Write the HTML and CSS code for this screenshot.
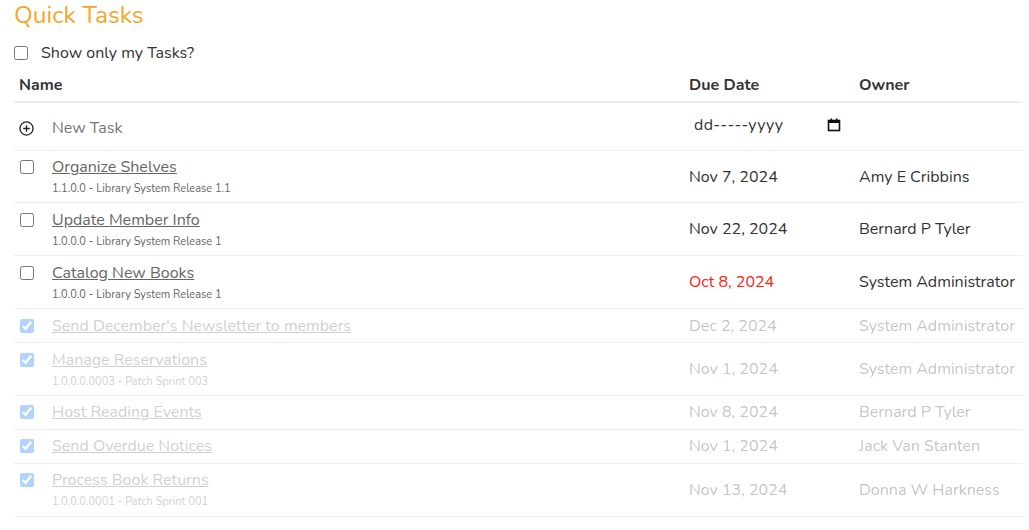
FILE: index.html
```html
<!DOCTYPE html>
<html lang="en">
<head>
<meta charset="utf-8">
<title>Quick Tasks</title>
<link rel="stylesheet" href="styles.css">
</head>
<body>
<main class="page">
  <h1 class="title">Quick Tasks</h1>
  <label class="filter"><input type="checkbox" class="cb"> <span>Show only my Tasks?</span></label>
  <table class="tasks">
    <colgroup><col class="c-name"><col class="c-due"><col class="c-owner"></colgroup>
    <thead>
      <tr><th>Name</th><th>Due Date</th><th>Owner</th></tr>
    </thead>
    <tbody>
      <tr class="new-row">
        <td>
          <div class="name-cell">
            <svg class="plus" width="15" height="15" viewBox="0 0 16 16"><circle cx="8" cy="8" r="7" fill="none" stroke="#222" stroke-width="1.4"/><path d="M8 4.5v7M4.5 8h7" stroke="#222" stroke-width="1.4"/></svg>
            <span class="new-text">New Task</span>
          </div>
        </td>
        <td>
          <div class="date-input"><span class="date-ph">dd-----yyyy</span>
            <svg class="cal" width="14" height="14" viewBox="0 0 14 14"><rect x="1.5" y="2.5" width="11" height="10" fill="none" stroke="#111" stroke-width="1.6"/><rect x="1" y="2" width="12" height="3" fill="#111"/><rect x="3.5" y="0.5" width="1.6" height="2.5" fill="#111"/><rect x="8.9" y="0.5" width="1.6" height="2.5" fill="#111"/></svg>
          </div>
        </td>
        <td></td>
      </tr>
      <tr>
        <td><div class="name-cell"><input type="checkbox" class="cb"><div><a class="task-link" href="#">Organize Shelves</a><div class="sub">1.1.0.0 - Library System Release 1.1</div></div></div></td>
        <td>Nov 7, 2024</td>
        <td>Amy E Cribbins</td>
      </tr>
      <tr>
        <td><div class="name-cell"><input type="checkbox" class="cb"><div><a class="task-link" href="#">Update Member Info</a><div class="sub">1.0.0.0 - Library System Release 1</div></div></div></td>
        <td>Nov 22, 2024</td>
        <td>Bernard P Tyler</td>
      </tr>
      <tr>
        <td><div class="name-cell"><input type="checkbox" class="cb"><div><a class="task-link" href="#">Catalog New Books</a><div class="sub">1.0.0.0 - Library System Release 1</div></div></div></td>
        <td class="overdue">Oct 8, 2024</td>
        <td>System Administrator</td>
      </tr>
      <tr class="done">
        <td><div class="name-cell"><input type="checkbox" class="cb" checked><div><a class="task-link" href="#">Send December's Newsletter to members</a></div></div></td>
        <td>Dec 2, 2024</td>
        <td>System Administrator</td>
      </tr>
      <tr class="done">
        <td><div class="name-cell"><input type="checkbox" class="cb" checked><div><a class="task-link" href="#">Manage Reservations</a><div class="sub">1.0.0.0.0003 - Patch Sprint 003</div></div></div></td>
        <td>Nov 1, 2024</td>
        <td>System Administrator</td>
      </tr>
      <tr class="done">
        <td><div class="name-cell"><input type="checkbox" class="cb" checked><div><a class="task-link" href="#">Host Reading Events</a></div></div></td>
        <td>Nov 8, 2024</td>
        <td>Bernard P Tyler</td>
      </tr>
      <tr class="done">
        <td><div class="name-cell"><input type="checkbox" class="cb" checked><div><a class="task-link" href="#">Send Overdue Notices</a></div></div></td>
        <td>Nov 1, 2024</td>
        <td>Jack Van Stanten</td>
      </tr>
      <tr class="done">
        <td><div class="name-cell"><input type="checkbox" class="cb" checked><div><a class="task-link" href="#">Process Book Returns</a><div class="sub">1.0.0.0.0001 - Patch Sprint 001</div></div></div></td>
        <td>Nov 13, 2024</td>
        <td>Donna W Harkness</td>
      </tr>
    </tbody>
  </table>
</main>
</body>
</html>
```

FILE: styles.css
```css
* { box-sizing: border-box; }
body {
  margin: 0;
  font-family: "Nunito", "Lato", "Open Sans", sans-serif;
  font-size: 16px;
  color: #333;
  background: #fff;
}
.page {
  width: 1022px;
  padding-left: 14px;
}
.title {
  margin: 0;
  font-size: 24.5px;
  line-height: 30px;
  font-weight: 400;
  color: #f5a62b;
}
.filter {
  display: flex;
  align-items: center;
  gap: 13px;
  margin-top: 11px;
  height: 24px;
  line-height: 24px;
}
.cb {
  width: 14px;
  height: 14px;
  margin: 0;
  flex: none;
}
.tasks {
  width: 1008px;
  margin-top: 3px;
  border-collapse: collapse;
  table-layout: fixed;
  border-bottom: 1px solid #ddd;
}
.c-name { width: 670px; }
.c-due { width: 170px; }
.c-owner { width: 168px; }
th {
  text-align: left;
  font-weight: 700;
  padding: 5px 5px 4px;
  line-height: 24px;
  border-bottom: 2px solid #eee;
}
td {
  padding: 4.5px 5px 4.4px;
  line-height: 24px;
  vertical-align: middle;
  border-bottom: 1px solid #eee;
  white-space: nowrap;
}
.name-cell {
  display: flex;
  align-items: flex-start;
  gap: 18px;
}
.name-cell .cb {
  margin-top: 5px;
  margin-left: 1px;
}
.new-row td { padding-top: 6px; padding-bottom: 5px; height: 48px; }
.new-row .name-cell { align-items: center; gap: 18px; margin-top: 3px; }
.plus { flex: none; margin-top: 1px; }
.new-text { color: #777; }
.date-input {
  display: flex;
  align-items: center;
  width: 152px;
  height: 36px;
  padding-left: 5px;
  margin-top: -3px;
}
.date-ph { flex: 1; color: #333; letter-spacing: 0.3px; }
.cal { flex: none; }
.task-link {
  color: #666;
  text-decoration: underline;
}
.sub {
  font-size: 11px;
  line-height: 19px;
  color: #666;
}
.overdue { color: #f21; }
.done td { color: rgba(51,51,51,0.3); }
.done .name-cell { opacity: 0.3; }
```
